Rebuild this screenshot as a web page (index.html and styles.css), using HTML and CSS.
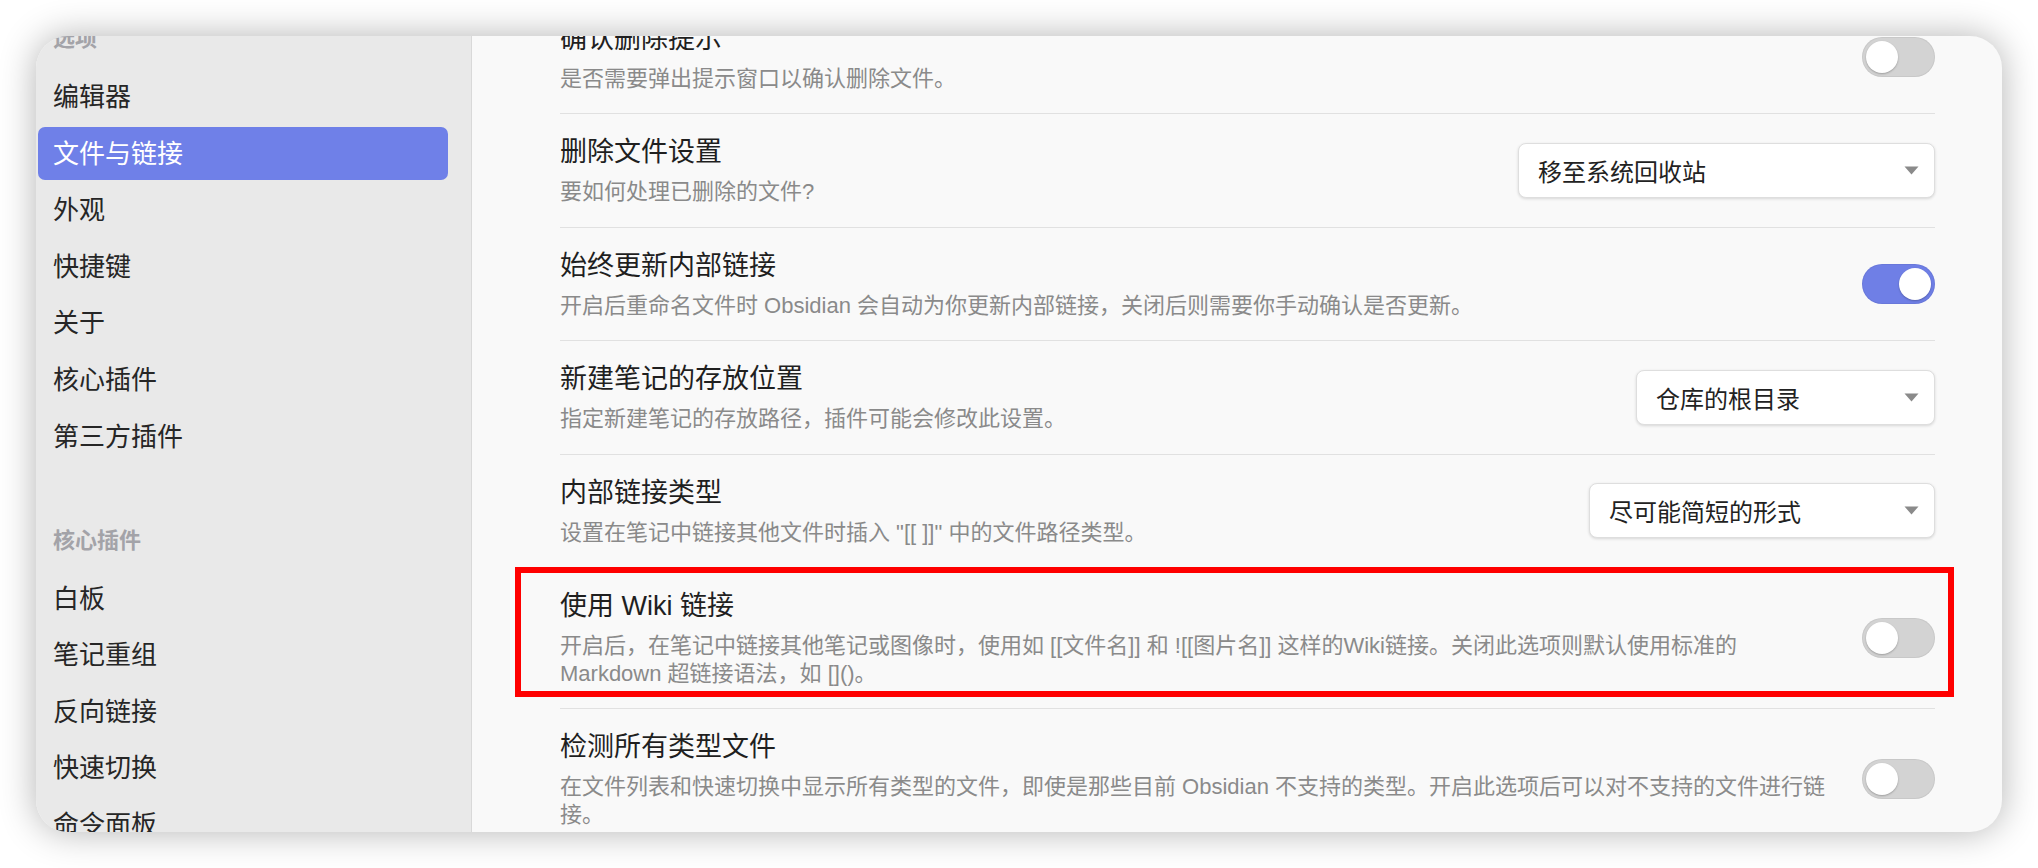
FILE: index.html
```html
<!DOCTYPE html>
<html lang="zh-CN">
<head>
    <meta charset="UTF-8">
    <meta name="viewport" content="width=device-width, initial-scale=1.0">
    <title>设置 - 文件与链接</title>
    <link rel="stylesheet" href="styles.css">
</head>
<body>
    <div class="window">
        <aside class="sidebar">
            <div class="sidebar-scroll">
                <div class="nav-group">
                    <div class="nav-title">选项</div>
                    <div class="nav-list">
                        <div class="nav-item">编辑器</div>
                        <div class="nav-item active">文件与链接</div>
                        <div class="nav-item">外观</div>
                        <div class="nav-item">快捷键</div>
                        <div class="nav-item">关于</div>
                        <div class="nav-item">核心插件</div>
                        <div class="nav-item">第三方插件</div>
                    </div>
                </div>
                <div class="nav-group">
                    <div class="nav-title">核心插件</div>
                    <div class="nav-list">
                        <div class="nav-item">白板</div>
                        <div class="nav-item">笔记重组</div>
                        <div class="nav-item">反向链接</div>
                        <div class="nav-item">快速切换</div>
                        <div class="nav-item">命令面板</div>
                        <div class="nav-item">日记</div>
                    </div>
                </div>
            </div>
        </aside>

        <main class="content">
            <div class="settings">
                <div class="setting-item">
                    <div class="setting-info">
                        <div class="setting-name">确认删除提示</div>
                        <div class="setting-desc">是否需要弹出提示窗口以确认删除文件。</div>
                    </div>
                    <div class="toggle"><span class="knob"></span></div>
                </div>

                <div class="setting-item">
                    <div class="setting-info">
                        <div class="setting-name">删除文件设置</div>
                        <div class="setting-desc">要如何处理已删除的文件?</div>
                    </div>
                    <div class="dropdown dropdown-wide">
                        <span>移至系统回收站</span>
                        <svg class="caret" width="15" height="9" viewBox="0 0 15 9"><path d="M0.5 0.5 H14.5 L7.5 8.5 Z" fill="#8a8a8a"/></svg>
                    </div>
                </div>

                <div class="setting-item">
                    <div class="setting-info">
                        <div class="setting-name">始终更新内部链接</div>
                        <div class="setting-desc">开启后重命名文件时 Obsidian 会自动为你更新内部链接，关闭后则需要你手动确认是否更新。</div>
                    </div>
                    <div class="toggle on"><span class="knob"></span></div>
                </div>

                <div class="setting-item">
                    <div class="setting-info">
                        <div class="setting-name">新建笔记的存放位置</div>
                        <div class="setting-desc">指定新建笔记的存放路径，插件可能会修改此设置。</div>
                    </div>
                    <div class="dropdown dropdown-narrow">
                        <span>仓库的根目录</span>
                        <svg class="caret" width="15" height="9" viewBox="0 0 15 9"><path d="M0.5 0.5 H14.5 L7.5 8.5 Z" fill="#8a8a8a"/></svg>
                    </div>
                </div>

                <div class="setting-item">
                    <div class="setting-info">
                        <div class="setting-name">内部链接类型</div>
                        <div class="setting-desc">设置在笔记中链接其他文件时插入 "[[ ]]" 中的文件路径类型。</div>
                    </div>
                    <div class="dropdown dropdown-medium">
                        <span>尽可能简短的形式</span>
                        <svg class="caret" width="15" height="9" viewBox="0 0 15 9"><path d="M0.5 0.5 H14.5 L7.5 8.5 Z" fill="#8a8a8a"/></svg>
                    </div>
                </div>

                <div class="setting-item">
                    <div class="setting-info">
                        <div class="setting-name">使用 Wiki 链接</div>
                        <div class="setting-desc">开启后，在笔记中链接其他笔记或图像时，使用如 [[文件名]] 和 ![[图片名]] 这样的Wiki链接。关闭此选项则默认使用标准的 Markdown 超链接语法，如 []()。</div>
                    </div>
                    <div class="toggle"><span class="knob"></span></div>
                    <div class="highlight"></div>
                </div>

                <div class="setting-item">
                    <div class="setting-info">
                        <div class="setting-name">检测所有类型文件</div>
                        <div class="setting-desc">在文件列表和快速切换中显示所有类型的文件，即使是那些目前 Obsidian 不支持的类型。开启此选项后可以对不支持的文件进行链接。</div>
                    </div>
                    <div class="toggle"><span class="knob"></span></div>
                </div>
            </div>
        </main>
    </div>
</body>
</html>
```

FILE: styles.css
```css
/* settings window */
body {
    margin: 0;
    background-color: #ffffff;
    font-family: "Liberation Sans", "Noto Sans CJK SC", sans-serif;
}
.window {
    margin: 36px;
    height: 796px;
    display: flex;
    border-radius: 32px;
    overflow: hidden;
    background-color: #f9f9f9;
    box-shadow: 0 0 36px rgba(0, 0, 0, 0.3);
}

/* left nav */
.sidebar {
    width: 436px;
    flex: none;
    box-sizing: border-box;
    padding: 0 23px 0 2px;
    background-color: #e9e9e9;
    border-right: 1px solid #d9d9d9;
    overflow: hidden;
}
.sidebar-scroll {
    margin-top: -10px;
}
.nav-group + .nav-group {
    margin-top: 65px;
}
.nav-title {
    padding-left: 15px;
    margin-bottom: 18px;
    font-size: 22px;
    line-height: 26px;
    font-weight: bold;
    color: #a3a3a8;
}
.nav-list {
    display: flex;
    flex-direction: column;
    gap: 3.6px;
}
.nav-item {
    height: 53px;
    line-height: 54px;
    padding-left: 15px;
    border-radius: 7px;
    font-size: 26px;
    color: #262626;
}
.nav-item.active {
    background-color: #6f80e8;
    color: #ffffff;
}

/* settings list */
.content {
    flex: 1;
    padding: 0 67px 0 88px;
    overflow: hidden;
}
.settings {
    margin-top: -36px;
}
.setting-item {
    position: relative;
    display: flex;
    align-items: center;
    padding: 20px 0 20.4px;
    border-top: 1px solid #e1e1e1;
}
.setting-info {
    flex: 1;
    min-width: 0;
    margin-right: 24px;
}
.setting-name {
    font-size: 27px;
    line-height: 36px;
    color: #1f1f1f;
}
.setting-desc {
    margin-top: 8px;
    font-size: 22px;
    line-height: 28px;
    color: #8a8a8a;
}

/* toggle */
.toggle {
    position: relative;
    flex: none;
    width: 73px;
    height: 40px;
    border-radius: 20px;
    background-color: #d3d3d3;
    box-shadow: inset 0 0 0 1px rgba(0, 0, 0, 0.05);
}
.toggle .knob {
    position: absolute;
    top: 4px;
    left: 4px;
    width: 32px;
    height: 32px;
    border-radius: 50%;
    background-color: #ffffff;
    box-shadow: 0 1px 2px rgba(0, 0, 0, 0.25);
}
.toggle.on {
    background-color: #6f7fe6;
}
.toggle.on .knob {
    left: auto;
    right: 4px;
}

/* dropdown */
.dropdown {
    flex: none;
    box-sizing: border-box;
    display: flex;
    align-items: center;
    justify-content: space-between;
    height: 55px;
    padding: 0 15px 0 19px;
    background-color: #ffffff;
    border: 1px solid #dedede;
    border-radius: 8px;
    box-shadow: 0 1px 3px rgba(0, 0, 0, 0.14);
    font-size: 24px;
    color: #222222;
}
.dropdown-wide {
    width: 417px;
}
.dropdown-medium {
    width: 346px;
}
.dropdown-narrow {
    width: 299px;
}

/* red annotation frame */
.highlight {
    position: absolute;
    top: -1px;
    bottom: 11px;
    left: -45px;
    right: -19px;
    border: 6px solid #ff0000;
    pointer-events: none;
}
```
